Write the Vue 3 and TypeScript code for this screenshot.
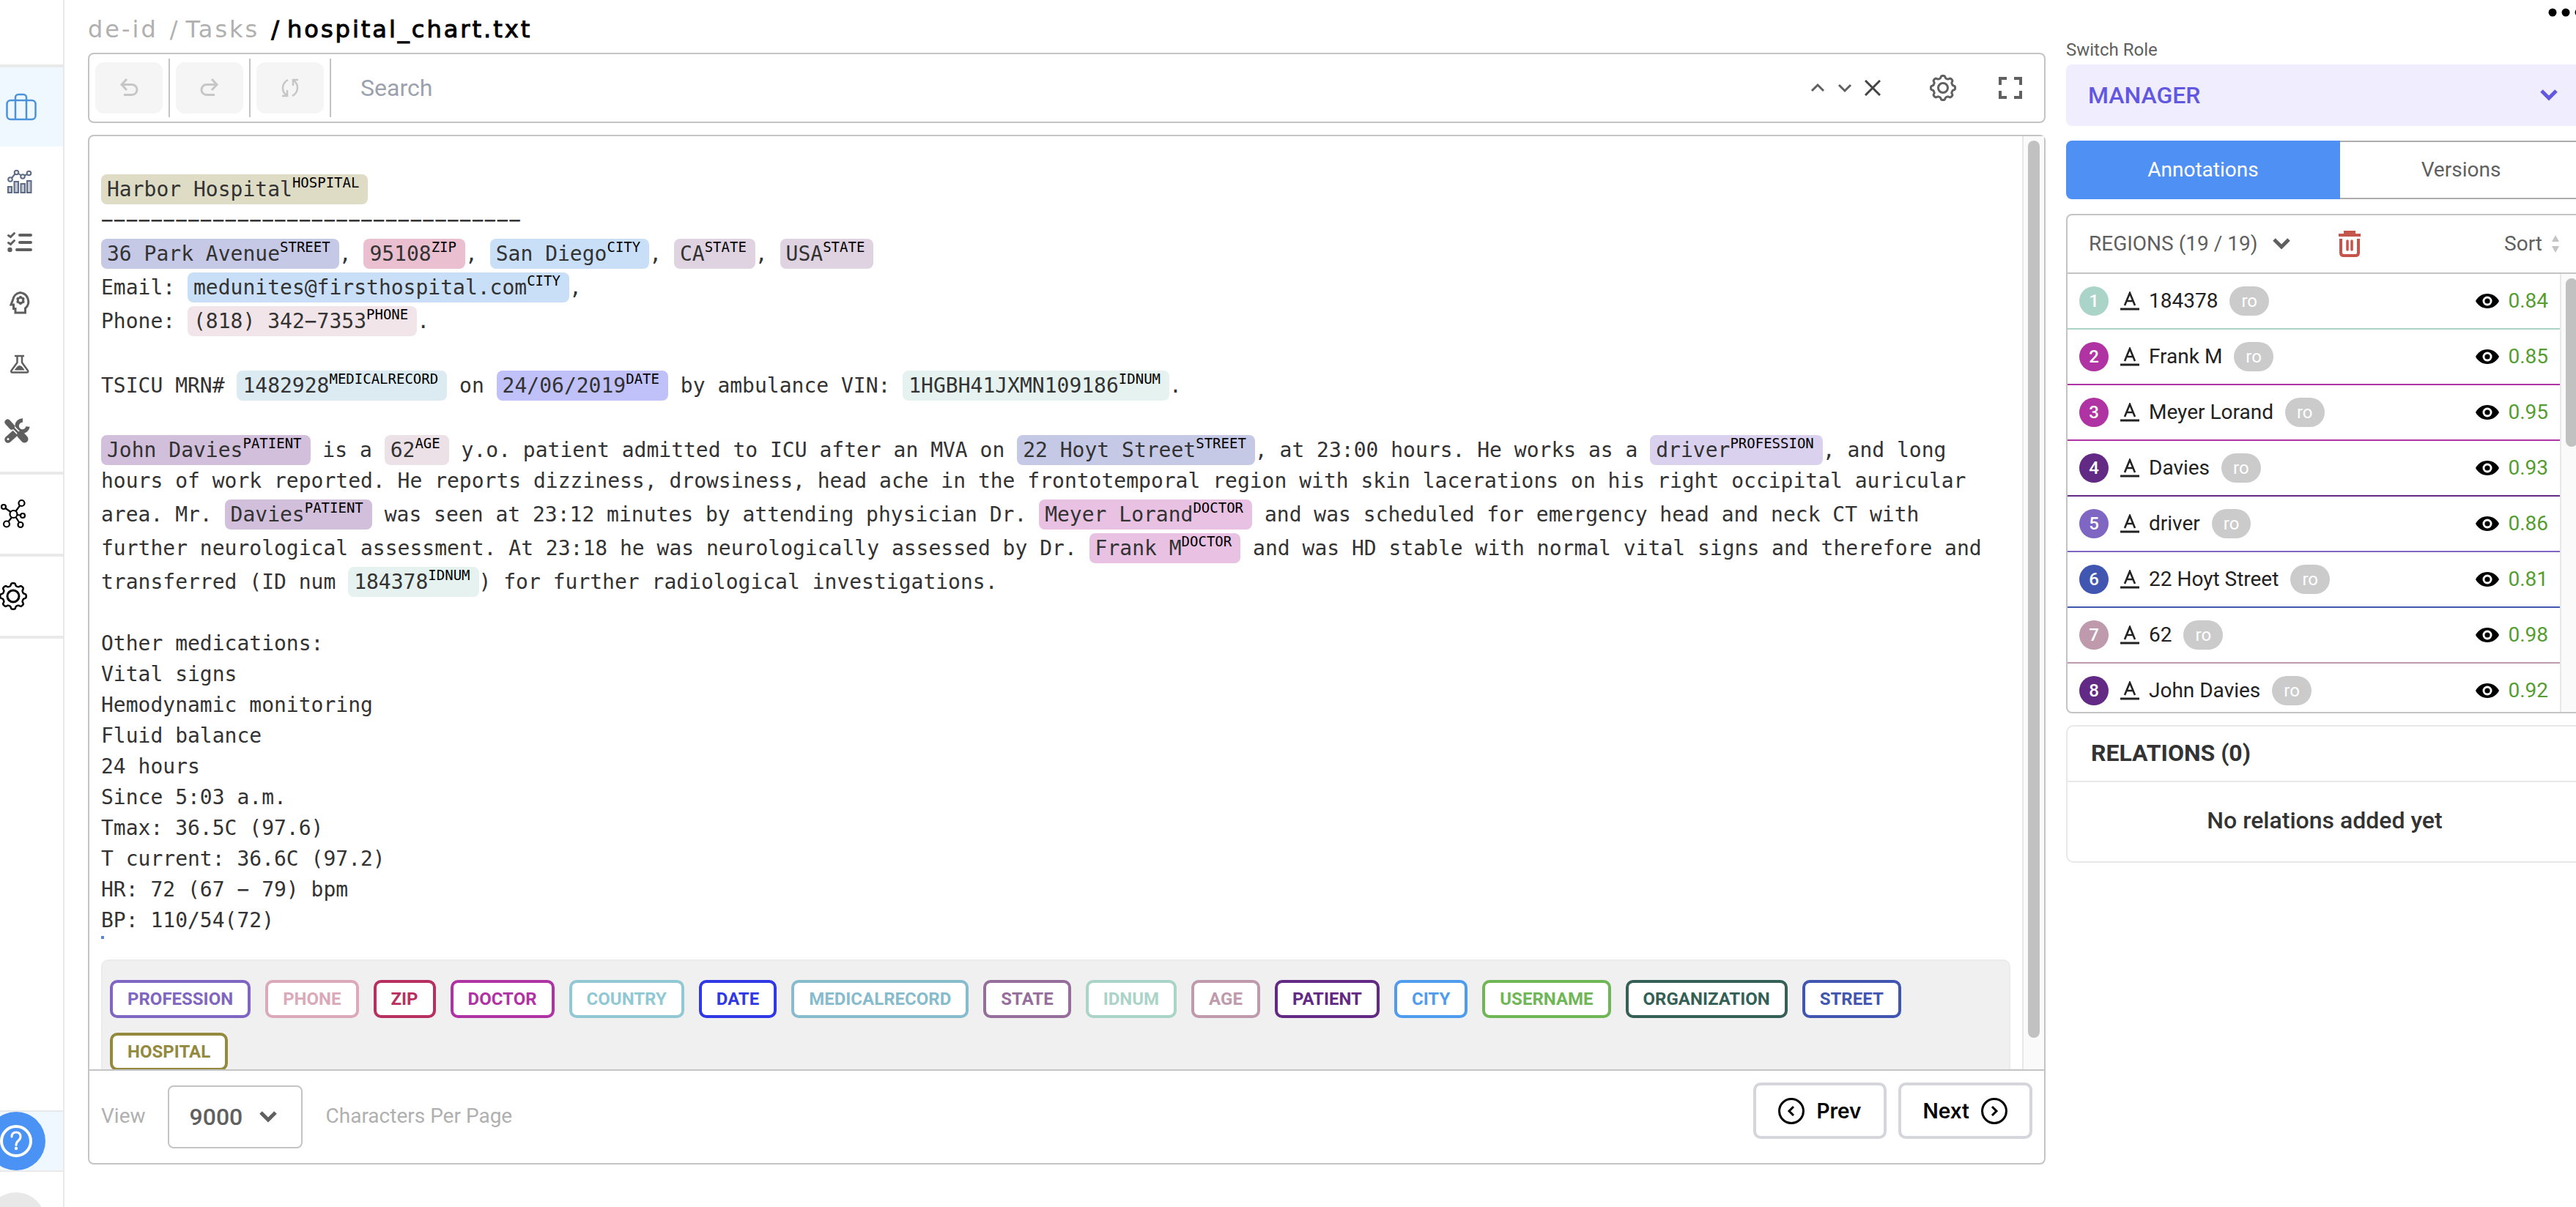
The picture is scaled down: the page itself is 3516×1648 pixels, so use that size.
<script setup lang="ts">
import { ref } from 'vue'

interface Segment {
  text: string
  label?: string
}

interface Region {
  name: string
  label: string
  score: string
}

const labelColors: Record<string, { line: string; fill: string }> = {
  PROFESSION: { line: '#7f66c2', fill: '#d9d1ee' },
  PHONE: { line: '#dba9b9', fill: '#f2e5e9' },
  ZIP: { line: '#b8305f', fill: '#eac0d0' },
  DOCTOR: { line: '#b033a4', fill: '#e8c1e3' },
  COUNTRY: { line: '#90c8d4', fill: '#dceff2' },
  DATE: { line: '#3038e6', fill: '#c0c1f9' },
  MEDICALRECORD: { line: '#86bccd', fill: '#dceaf1' },
  STATE: { line: '#966e9b', fill: '#dfd3e1' },
  IDNUM: { line: '#abd4c8', fill: '#e5f2ef' },
  AGE: { line: '#be9aac', fill: '#ece1e7' },
  PATIENT: { line: '#622a85', fill: '#d1bfdb' },
  CITY: { line: '#4f9cef', fill: '#c9dff8' },
  USERNAME: { line: '#6fb657', fill: '#d8ecd0' },
  ORGANIZATION: { line: '#356055', fill: '#c4d1ce' },
  STREET: { line: '#4056b0', fill: '#c6c9e6' },
  HOSPITAL: { line: '#938a3e', fill: '#dedcc5' },
}
const labels = Object.keys(labelColors)

// Annotated spans are written as [[text|LABEL]].
const source = `
[[Harbor Hospital|HOSPITAL]]
${'−'.repeat(34)}
[[36 Park Avenue|STREET]], [[95108|ZIP]], [[San Diego|CITY]], [[CA|STATE]], [[USA|STATE]]
Email: [[medunites@firsthospital.com|CITY]],
Phone: [[(818) 342−7353|PHONE]].

TSICU MRN# [[1482928|MEDICALRECORD]] on [[24/06/2019|DATE]] by ambulance VIN: [[1HGBH41JXMN109186|IDNUM]].

[[John Davies|PATIENT]] is a [[62|AGE]] y.o. patient admitted to ICU after an MVA on [[22 Hoyt Street|STREET]], at 23:00 hours. He works as a [[driver|PROFESSION]], and long hours of work reported. He reports dizziness, drowsiness, head ache in the frontotemporal region with skin lacerations on his right occipital auricular area. Mr. [[Davies|PATIENT]] was seen at 23:12 minutes by attending physician Dr. [[Meyer Lorand|DOCTOR]] and was scheduled for emergency head and neck CT with further neurological assessment. At 23:18 he was neurologically assessed by Dr. [[Frank M|DOCTOR]] and was HD stable with normal vital signs and therefore and transferred (ID num [[184378|IDNUM]]) for further radiological investigations.

Other medications:
Vital signs
Hemodynamic monitoring
Fluid balance
24 hours
Since 5:03 a.m.
Tmax: 36.5C (97.6)
T current: 36.6C (97.2)
HR: 72 (67 − 79) bpm
BP: 110/54(72)`

const paragraphs: Segment[][] = source.split('\n').map((line) =>
  line
    .split(/(\[\[.*?\]\])/)
    .filter((part) => part !== '')
    .map((part) => {
      const match = part.match(/^\[\[(.*)\|(.*)\]\]$/)
      return match ? { text: match[1], label: match[2] } : { text: part }
    }),
)

const regions: Region[] = [
  { name: '184378', label: 'IDNUM', score: '0.84' },
  { name: 'Frank M', label: 'DOCTOR', score: '0.85' },
  { name: 'Meyer Lorand', label: 'DOCTOR', score: '0.95' },
  { name: 'Davies', label: 'PATIENT', score: '0.93' },
  { name: 'driver', label: 'PROFESSION', score: '0.86' },
  { name: '22 Hoyt Street', label: 'STREET', score: '0.81' },
  { name: '62', label: 'AGE', score: '0.98' },
  { name: 'John Davies', label: 'PATIENT', score: '0.92' },
]

const search = ref('')
const pageSize = ref('9000')
const role = ref('MANAGER')

// Outline of a cog with eight soft teeth around (cx, cy).
function cog(cx: number, cy: number, radius: number, depth: number): string {
  const steps = 128
  const points: string[] = []
  for (let i = 0; i < steps; i++) {
    const a = (i / steps) * Math.PI * 2
    const r = radius + depth * Math.tanh(2.2 * Math.cos(8 * a))
    points.push(`${(cx + r * Math.cos(a)).toFixed(2)} ${(cy + r * Math.sin(a)).toFixed(2)}`)
  }
  return `M${points.join('L')}Z`
}
</script>

<template>
  <div class="app">
    <nav class="rail" aria-label="Main">
      <div class="rail-top"></div>
      <a class="rail-item active" href="#" aria-label="Projects">
        <svg width="52" height="48" fill="none" stroke="#4a93da" stroke-width="2.5">
          <rect x="9.5" y="15" width="39" height="26" rx="5" />
          <path d="M21 41V11a4 4 0 0 1 4-4h7a4 4 0 0 1 4 4v30" />
        </svg>
      </a>
      <div class="rail-group">
        <a class="rail-item" href="#" aria-label="Analytics">
          <svg width="52" height="48" fill="#c3c8d2" stroke="#5d6b86" stroke-width="2">
            <rect x="11" y="31" width="5" height="8" />
            <rect x="19.500" y="24" width="5.500" height="15" />
            <rect x="28.500" y="27" width="5.500" height="12" />
            <rect x="37" y="23" width="5.500" height="16" />
            <g fill="none">
              <circle cx="14" cy="21" r="2.800" />
              <circle cx="22.500" cy="11.500" r="2.800" />
              <circle cx="31" cy="17" r="2.800" />
              <circle cx="39.500" cy="12.500" r="2.800" />
              <path d="M16 19l4.500-5.500M25 13l4 2.500M33.500 15.500l3.500-1.500" />
            </g>
          </svg>
        </a>
        <a class="rail-item" href="#" aria-label="Tasks">
          <svg width="52" height="48" fill="none" stroke="#5f5f5f" stroke-width="4" stroke-linecap="round">
            <path d="M27 13h15M27 23h15M23 33h19" />
            <path d="M11.500 13.500l3 2 5-5M11.500 23.500l3 2 5-5" stroke-width="3" />
            <circle cx="13.500" cy="33" r="3.200" fill="#5f5f5f" stroke="none" />
          </svg>
        </a>
        <a class="rail-item" href="#" aria-label="Models">
          <svg width="52" height="48" fill="none" stroke="#5f5f5f" stroke-width="3">
            <path d="M27.500 7.500A12.300 12.300 0 0 1 34.500 29v6H21v-5.500h-2.500V24H15l2.500-6.500A12 12 0 0 1 27.500 7.500z" />
            <circle cx="28" cy="18" r="3.800" stroke-width="3" />
            <path d="M28 12v12M22.800 15l10.400 6M22.800 21l10.400-6" stroke-width="2.800" stroke-dasharray="2.500 7" />
          </svg>
        </a>
        <a class="rail-item" href="#" aria-label="Playground">
          <svg width="52" height="48" fill="none" stroke="#5f5f5f" stroke-width="2.500" stroke-linejoin="round">
            <path d="M20 10h13" />
            <path d="M23.500 10v9L15.500 30q-1 2.500 1.500 2.500h19.500q2.500 0 1.500-2.500L30 19v-9" />
            <path d="M20.500 29l3.500-4.500 2.500-1 3 1L33 29z" fill="#5f5f5f" stroke-width="1" />
          </svg>
        </a>
        <a class="rail-item" href="#" aria-label="Tools">
          <svg width="52" height="56" fill="none" stroke="#5f5f5f" stroke-linecap="round">
            <path d="M20 36L11 44" stroke-width="9.500" />
            <path d="M31 18A7.500 7.500 0 1 0 38 26.500" stroke-width="5.500" stroke-linecap="butt" />
            <path d="M13 23L34 44" stroke="#fff" stroke-width="6" />
            <path d="M10.500 20.500L16 26.500" stroke-width="8" />
            <path d="M16 26L28 38" stroke-width="2.500" />
            <path d="M28 37.500L33.500 43.500" stroke-width="10" />
            <circle cx="11" cy="43.500" r="1.500" fill="#fff" stroke="none" />
          </svg>
        </a>
      </div>
      <a class="rail-item section" href="#" aria-label="Integrations">
        <svg width="52" height="48" fill="none" stroke="#000" stroke-width="2.200">
          <circle cx="18.500" cy="24" r="5" />
          <circle cx="5" cy="14" r="3" />
          <circle cx="29.500" cy="9" r="4" />
          <circle cx="31" cy="26" r="3" />
          <circle cx="9" cy="37.500" r="4" />
          <circle cx="28" cy="38.500" r="3.500" />
          <path d="M14.500 21L7.500 16M21.500 20l5.500-7.500M23.500 25l4.500.5M16 28.500L11.500 34M21.500 28l4.500 7" />
        </svg>
      </a>
      <a class="rail-item section" href="#" aria-label="Settings">
        <svg width="52" height="48" fill="none" stroke="#000" stroke-width="2.500">
          <path :d="cog(18, 24, 16, 1.800)" />
          <circle cx="18" cy="24" r="8" stroke-width="3" />
        </svg>
      </a>
      <div class="section-end"></div>
      <div class="help-row">
        <button class="help" type="button" aria-label="Help">
          <svg width="80" height="80" fill="none" stroke="#fff" stroke-width="4">
            <circle cx="40" cy="40" r="20" />
            <path d="M34 34q0-6 6-6t6 6q0 3-3 5.500t-3 6" stroke-width="3" stroke-linecap="round" />
            <circle cx="40" cy="50" r="2.200" fill="#fff" stroke="none" />
          </svg>
        </button>
      </div>
      <div class="avatar"></div>
    </nav>

    <main class="main">
      <header class="crumbs">
        <a href="#">de-id</a>
        <a href="#"><span>/</span>Tasks</a>
        <h1><span>/</span>hospital_chart.txt</h1>
      </header>

      <div class="toolbar">
        <div class="tool-cell">
          <button class="tool" type="button" disabled aria-label="Undo">
            <svg width="26" height="26" fill="none" stroke="#c6c6c6" stroke-width="3">
              <path d="M10 1L3 8.500 10 16M3 8.500h14a7 7 0 0 1 0 14H6" />
            </svg>
          </button>
        </div>
        <div class="tool-cell">
          <button class="tool" type="button" disabled aria-label="Redo">
            <svg width="26" height="26" fill="none" stroke="#c6c6c6" stroke-width="3">
              <path d="M16 1l7 7.500-7 7.500M23 8.500H9a7 7 0 0 0 0 14h11" />
            </svg>
          </button>
        </div>
        <div class="tool-cell">
          <button class="tool" type="button" disabled aria-label="Reset">
            <svg width="26" height="26" fill="none" stroke="#c6c6c6" stroke-width="2.500">
              <path d="M10 2C1 7 1 18 8 23M2 24h7v-8M16 24c9-5 9-16 2-21M24 2h-7v8" />
            </svg>
          </button>
        </div>
        <input v-model="search" class="search" type="text" placeholder="Search" aria-label="Search" />
        <div class="find">
          <button type="button" aria-label="Previous match">
            <svg width="20" height="22" fill="none" stroke="#606060" stroke-width="3"><path d="M2 15l8-8 8 8" /></svg>
          </button>
          <button type="button" aria-label="Next match">
            <svg width="20" height="22" fill="none" stroke="#606060" stroke-width="3"><path d="M2 7l8 8 8-8" /></svg>
          </button>
          <button type="button" aria-label="Clear search">
            <svg width="22" height="22" fill="none" stroke="#444" stroke-width="3"><path d="M1 1l20 20M21 1L1 21" /></svg>
          </button>
        </div>
        <button class="plain" type="button" aria-label="Settings">
          <svg width="36" height="36" fill="none" stroke="#606060" stroke-width="3">
            <path :d="cog(18, 18, 15, 1.600)" />
            <circle cx="18" cy="18" r="6.500" />
          </svg>
        </button>
        <button class="plain" type="button" aria-label="Full screen">
          <svg width="32" height="30" fill="none" stroke="#606060" stroke-width="4">
            <path d="M2 11V2h9M21 2h9v9M30 19v9h-9M11 28H2v-9" />
          </svg>
        </button>
      </div>

      <section class="editor">
        <div class="viewport">
          <div class="document">
            <div class="text">
              <p v-for="(parts, n) in paragraphs" :key="n"><template v-for="(part, i) in parts" :key="i"><mark
                v-if="part.label"
                :style="{ background: labelColors[part.label].fill }"
              >{{ part.text }}<sup>{{ part.label }}</sup></mark><template v-else>{{ part.text }}</template></template></p>
            </div>
            <div class="caret"></div>
            <div class="labels">
              <button
                v-for="name in labels"
                :key="name"
                type="button"
                :style="{ color: labelColors[name].line }"
              >{{ name }}</button>
            </div>
          </div>
          <div class="track"><div class="thumb"></div></div>
        </div>

        <footer class="pager">
          <label for="page-size">View</label>
          <div class="select size">
            <select id="page-size" v-model="pageSize">
              <option>9000</option>
            </select>
            <svg width="26" height="18" fill="none" stroke="#606060" stroke-width="5"><path d="M3 3l10 10L23 3" /></svg>
          </div>
          <span class="unit">Characters Per Page</span>
          <button class="step" type="button">
            <svg width="36" height="36" fill="none" stroke="#000" stroke-width="3">
              <circle cx="18" cy="18" r="16.500" />
              <path d="M21 12l-6 6 6 6" />
            </svg>
            Prev
          </button>
          <button class="step" type="button">
            Next
            <svg width="36" height="36" fill="none" stroke="#000" stroke-width="3">
              <circle cx="18" cy="18" r="16.500" />
              <path d="M15 12l6 6-6 6" />
            </svg>
          </button>
        </footer>
      </section>
    </main>

    <aside class="side">
      <div class="side-top">
        <label for="role">Switch Role</label>
        <button class="more" type="button" aria-label="More">
          <svg width="48" height="12" fill="#000">
            <circle cx="6" cy="6" r="5.500" />
            <circle cx="24" cy="6" r="5.500" />
            <circle cx="42" cy="6" r="5.500" />
          </svg>
        </button>
      </div>
      <div class="select role">
        <select id="role" v-model="role">
          <option>MANAGER</option>
        </select>
        <svg width="26" height="18" fill="none" stroke="#6257e0" stroke-width="5"><path d="M3 3l10 10L23 3" /></svg>
      </div>

      <div class="tabs">
        <button class="tab current" type="button">Annotations</button>
        <button class="tab" type="button">Versions</button>
      </div>

      <section class="regions">
        <header>
          <button class="head" type="button">
            REGIONS (19 / 19)
            <svg width="26" height="18" fill="none" stroke="#606060" stroke-width="5"><path d="M3 3l10 10L23 3" /></svg>
          </button>
          <button class="head trash" type="button" aria-label="Delete all regions">
            <svg width="32" height="38" fill="none" stroke="#c5554a" stroke-width="4">
              <path d="M1 7h30M10 6V3h12v3" />
              <path d="M4 12v19q0 4 4 4h16q4 0 4-4V12" />
              <path d="M13 15v12M19 15v12" stroke-width="3.500" stroke-linecap="round" />
            </svg>
          </button>
          <button class="head sort" type="button">
            Sort
            <svg width="12" height="24" fill="#c4c4c4"><path d="M6 0l5 9H1zM6 24l5-9H1z" /></svg>
          </button>
        </header>
        <div class="list">
          <ul>
            <li v-for="(r, i) in regions" :key="i" :style="{ borderColor: labelColors[r.label].line }">
              <span class="index" :style="{ background: labelColors[r.label].line }">{{ i + 1 }}</span>
              <svg width="26" height="26" fill="none" stroke="#222" stroke-width="3">
                <path d="M0 24h26" />
                <path d="M6 19l7-17 7 17M8.500 13h9" stroke-width="2.600" />
              </svg>
              <span class="name">{{ r.name }}</span>
              <span class="badge">ro</span>
              <svg class="eye" width="32" height="22" fill="#000">
                <path d="M16 1C9 1 3 5 0 11c3 6 9 10 16 10s13-4 16-10C29 5 23 1 16 1z" />
                <circle cx="16" cy="11" r="6.500" fill="#fff" />
                <circle cx="16" cy="11" r="3.600" />
              </svg>
              <span class="score">{{ r.score }}</span>
            </li>
          </ul>
          <div class="track"><div class="thumb"></div></div>
        </div>
      </section>

      <section class="relations">
        <h2>RELATIONS (0)</h2>
        <p>No relations added yet</p>
      </section>
    </aside>
  </div>
</template>

<style>
html,
body {
  background: #fff;
  overflow: hidden;
}
</style>

<style scoped>
.app {
  display: flex;
  height: 100vh;
  overflow: hidden;
  background: #fff;
  color: #606060;
  font: 28px/40px Roboto, sans-serif;
}
.app *,
.app *::before {
  box-sizing: border-box;
}
button,
input,
select {
  margin: 0;
  padding: 0;
  border: 0;
  background: none;
  color: inherit;
  font: inherit;
}
a {
  color: inherit;
  text-decoration: none;
}
svg {
  display: block;
  flex: none;
}

/* Icon rail */
.rail {
  flex: 0 0 88px;
  display: flex;
  flex-direction: column;
  overflow: hidden;
  border-right: 2px solid #e9e9e9;
}
.rail-top {
  flex: 0 0 92px;
  border-bottom: 4px solid #e9e9e9;
}
.rail-item {
  flex: none;
  display: flex;
  align-items: center;
  height: 84px;
}
.rail-item.active {
  height: 108px;
  background: #f0f8ff;
}
.rail-group {
  padding: 6px 0 18px;
}
.rail-item.section {
  height: 112px;
  border-top: 4px solid #e9e9e9;
}
.section-end {
  border-top: 4px solid #e9e9e9;
}
.help-row {
  margin-top: auto;
  border: solid #e9e9e9;
  border-width: 2px 0;
  background: #f0f8ff;
}
.help {
  display: block;
  width: 80px;
  height: 80px;
  margin-left: -18px;
  border-radius: 50%;
  background: #4b92f5;
}
.avatar {
  flex: none;
  width: 80px;
  height: 80px;
  margin: 28px 0 -60px -18px;
  border-radius: 50%;
  background: #e8e8e8;
}

/* Main column */
.main {
  flex: 1;
  min-width: 0;
  display: flex;
  flex-direction: column;
  padding: 0 28px 58px 32px;
}
.crumbs {
  flex: 0 0 72px;
  display: flex;
  gap: 16px;
  padding-top: 18px;
  color: #b0b0b0;
  font: 32px/44px "DejaVu Sans", sans-serif;
  letter-spacing: 3px;
}
.crumbs h1 {
  margin: 0;
  color: #000;
  font: inherit;
  -webkit-text-stroke: 1px #000;
}
.crumbs span {
  margin-right: 8px;
}
.toolbar {
  flex: 0 0 96px;
  display: flex;
  align-items: center;
  padding: 0 30px 0 8px;
  border: 2px solid #c4c4c4;
  border-radius: 8px;
}
.tool-cell {
  display: flex;
  align-items: center;
  height: 80px;
  padding-right: 8px;
  margin-right: 8px;
  border-right: 2px solid #c4c4c4;
}
.tool {
  display: grid;
  place-items: center;
  width: 92px;
  height: 70px;
  border-radius: 12px;
  background: #f5f5f5;
}
.search {
  flex: 1;
  min-width: 0;
  height: 80px;
  padding-left: 32px;
  outline: 0;
  font-size: 32px;
}
.search::placeholder {
  color: #9ca1ae;
  opacity: 1;
}
.find {
  display: flex;
  gap: 17px;
  margin-right: 67px;
}
.plain {
  margin-right: 58px;
}
.plain:last-child {
  margin-right: 0;
}

/* Document */
.editor {
  flex: 1;
  min-height: 0;
  display: flex;
  flex-direction: column;
  margin-top: 16px;
  border: 2px solid #c4c4c4;
  border-radius: 8px;
}
.viewport {
  flex: 1;
  min-height: 0;
  display: flex;
  overflow: hidden;
}
.document {
  flex: 1;
  min-width: 0;
  padding: 6px 16px 0;
}
.text {
  color: #333;
  font: 28px/42px "DejaVu Sans Mono", monospace;
  white-space: pre-wrap;
}
.text p {
  min-height: 42px;
  margin: 0;
}
mark {
  padding: 4px 12px 4px 8px;
  border-radius: 8px;
  color: inherit;
}
sup {
  color: #000;
  font-size: 19px;
  line-height: 30px;
  vertical-align: 12px;
}
.caret {
  width: 4px;
  height: 4px;
  background: #5b84d4;
}
.labels {
  display: flex;
  flex-wrap: wrap;
  gap: 20px;
  margin-top: 28px;
  padding: 26px 10px;
  border: 2px solid #ebebeb;
  border-radius: 10px;
  background: #f0f0f0;
}
.labels button {
  height: 52px;
  padding: 0 20px;
  border: 4px solid;
  border-radius: 10px;
  background: #fff;
  font-size: 24px;
  font-weight: 700;
  line-height: 42px;
}
.track {
  flex: 0 0 30px;
  padding: 6px 4px 0 6px;
  border-left: 2px solid #e8e8e8;
  background: #fafafa;
}
.thumb {
  width: 16px;
  border-radius: 8px;
  background: #c1c1c1;
}
.viewport .thumb {
  height: calc(100% - 43px);
}

/* Pager */
.pager {
  flex: 0 0 128px;
  display: flex;
  align-items: flex-start;
  padding: 16px 16px 0;
  border-top: 2px solid #c4c4c4;
  color: #b0b0b0;
}
.pager label,
.unit {
  padding: 26px 0 0;
}
.unit {
  margin-right: auto;
}
.select {
  display: grid;
  align-items: center;
}
.select select,
.select svg {
  grid-area: 1 / 1;
}
.select svg {
  justify-self: end;
  pointer-events: none;
}
.select select {
  width: 100%;
  height: 100%;
  appearance: none;
  font-size: 32px;
  font-weight: 500;
}
.size {
  width: 184px;
  height: 86px;
  margin: 4px 32px 0 30px;
  border: 2px solid #c4c4c4;
  border-radius: 8px;
  color: #606060;
}
.size select {
  padding-left: 28px;
}
.size svg {
  margin-right: 32px;
}
.step {
  display: flex;
  align-items: center;
  gap: 16px;
  height: 77px;
  margin-left: 16px;
  padding: 0 30px;
  border: 4px solid #d5d6dc;
  border-radius: 10px;
  color: #000;
  font: 600 28px/40px Inter, sans-serif;
}

/* Side column runs past the right edge of the window */
.side {
  flex: 0 0 706px;
  margin-right: -10px;
}
.side-top {
  display: flex;
  justify-content: space-between;
  height: 88px;
}
.side-top label {
  padding-top: 48px;
  font-size: 24px;
}
.more {
  height: 12px;
  margin-top: 11px;
}
.role {
  height: 84px;
  border-radius: 8px;
  background: #efedfe;
  color: #6257e0;
}
.role select {
  padding-left: 30px;
}
.role svg {
  margin-right: 34px;
}
.tabs {
  display: flex;
  height: 80px;
  margin: 20px 0;
}
.tab {
  flex: 1;
  border: 2px solid #adadad;
  border-left: 0;
  border-radius: 0 8px 8px 0;
}
.tab.current {
  flex: 0 0 374px;
  border: 0;
  border-radius: 8px 0 0 8px;
  background: #4f90f4;
  color: #fff;
}
.regions {
  border: 2px solid #c4c4c4;
  border-radius: 8px;
}
.regions header {
  display: flex;
  align-items: center;
  height: 80px;
  padding: 0 30px 0 29px;
  border-bottom: 2px solid #c4c4c4;
}
.head {
  display: flex;
  align-items: center;
  gap: 20px;
}
.trash {
  margin-left: 64px;
}
.sort {
  gap: 12px;
  margin-left: auto;
}
.list {
  display: flex;
  height: 598px;
  overflow: hidden;
}
.list ul {
  flex: 1;
  margin: 0;
  padding: 0;
  list-style: none;
}
.list li {
  display: flex;
  align-items: center;
  height: 76px;
  padding: 0 16px;
  border-bottom: 2px solid;
  color: #222;
}
.index {
  width: 40px;
  margin-right: 16px;
  border-radius: 50%;
  color: #fff;
  font-size: 24px;
  font-weight: 500;
  text-align: center;
}
.name {
  margin: 0 16px 0 13px;
}
.badge {
  padding: 0 16px;
  border-radius: 20px;
  background: #cbcbcb;
  color: #fff;
  font-size: 24px;
}
.eye {
  margin-left: auto;
}
.score {
  margin-left: 12px;
  color: #559c33;
}
.list .track {
  flex-basis: 30px;
}
.list .thumb {
  height: 230px;
}
.relations {
  margin-top: 16px;
  border: 2px solid #e8e8e8;
  border-radius: 10px;
  color: #333;
  font-size: 32px;
}
.relations h2 {
  height: 76px;
  margin: 0;
  padding: 16px 32px;
  border-bottom: 2px solid #e8e8e8;
  font-size: 32px;
  font-weight: 700;
}
.relations p {
  margin: 0;
  padding: 32px 0 36px;
  font-weight: 500;
  text-align: center;
}
</style>
